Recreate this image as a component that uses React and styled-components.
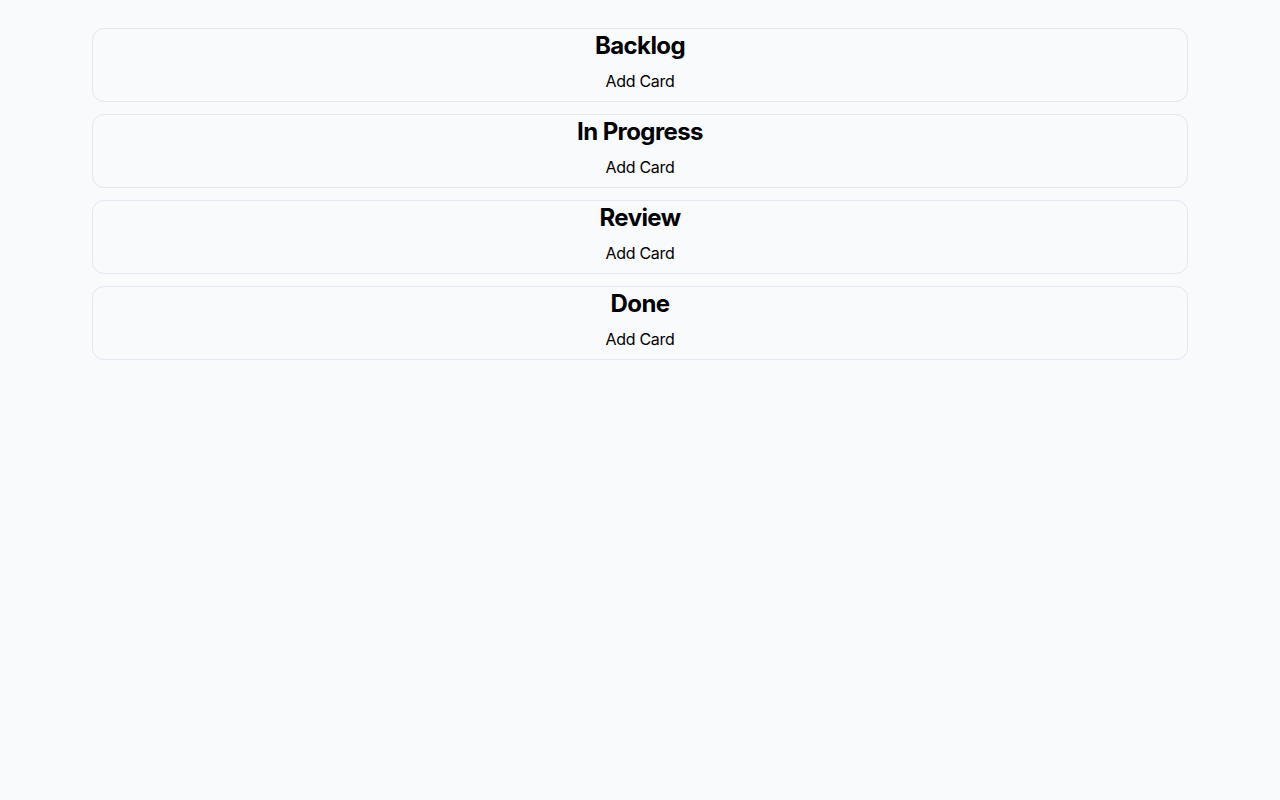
import React from 'react';
import styled, { createGlobalStyle } from 'styled-components';

const GlobalStyle = createGlobalStyle`
  html, body {
    margin: 0;
    padding: 0;
    background: #f8fafc;
    font-family: Inter, "Noto Sans", "Liberation Sans", sans-serif;
    color: #000;
  }
`;

const Page = styled.div`
  min-height: 800px;
  box-sizing: border-box;
  padding: 28px 92px;
  background: #f8fafc;
`;

const Board = styled.div`
  display: flex;
  flex-direction: column;
  gap: 12px;
`;

const Column = styled.section`
  display: flex;
  flex-direction: column;
  align-items: center;
  border: 1px solid #e2e8f0;
  border-radius: 12px;
  background: #f8fafc;
`;

const Title = styled.h2`
  margin: 0;
  padding-top: 1px;
  margin-bottom: -1px;
  font-size: 24px;
  line-height: 32px;
  font-weight: 700;
  letter-spacing: -0.025em;
`;

const AddButton = styled.button`
  font: inherit;
  font-size: 16px;
  line-height: 24px;
  letter-spacing: -0.02em;
  padding: 8px 16px;
  background: none;
  border: none;
  color: #000;
  cursor: pointer;
`;

const columns = ['Backlog', 'In Progress', 'Review', 'Done'];

export default function App() {
  return (
    <>
      <GlobalStyle />
      <Page>
        <Board>
          {columns.map((name) => (
            <Column key={name}>
              <Title>{name}</Title>
              <AddButton>Add Card</AddButton>
            </Column>
          ))}
        </Board>
      </Page>
    </>
  );
}
